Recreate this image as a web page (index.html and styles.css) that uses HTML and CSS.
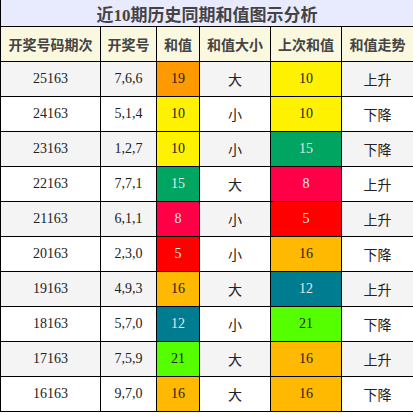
FILE: index.html
```html
<!DOCTYPE html>
<html lang="zh">

<head>
    <meta charset="UTF-8">
    <meta name="viewport" content="width=device-width, initial-scale=1.0">
    <title>近10期历史同期和值图示分析</title>
    <link rel="stylesheet" href="styles.css">
</head>

<body>
    <table class="history">
        <colgroup>
            <col class="c-issue">
            <col class="c-num">
            <col class="c-sum">
            <col class="c-size">
            <col class="c-last">
            <col class="c-trend">
        </colgroup>
        <thead>
            <tr class="title-row">
                <th colspan="6">近10期历史同期和值图示分析</th>
            </tr>
            <tr class="head-row">
                <th>开奖号码期次</th>
                <th>开奖号</th>
                <th>和值</th>
                <th>和值大小</th>
                <th>上次和值</th>
                <th>和值走势</th>
            </tr>
        </thead>
        <tbody>
            <tr>
                <td>25163</td><td>7,6,6</td><td class="v19">19</td><td class="cn">大</td><td class="v10">10</td><td class="cn">上升</td>
            </tr>
            <tr>
                <td>24163</td><td>5,1,4</td><td class="v10">10</td><td class="cn">小</td><td class="v10">10</td><td class="cn">下降</td>
            </tr>
            <tr>
                <td>23163</td><td>1,2,7</td><td class="v10">10</td><td class="cn">小</td><td class="v15">15</td><td class="cn">下降</td>
            </tr>
            <tr>
                <td>22163</td><td>7,7,1</td><td class="v15">15</td><td class="cn">大</td><td class="v8">8</td><td class="cn">上升</td>
            </tr>
            <tr>
                <td>21163</td><td>6,1,1</td><td class="v8">8</td><td class="cn">小</td><td class="v5">5</td><td class="cn">上升</td>
            </tr>
            <tr>
                <td>20163</td><td>2,3,0</td><td class="v5">5</td><td class="cn">小</td><td class="v16">16</td><td class="cn">下降</td>
            </tr>
            <tr>
                <td>19163</td><td>4,9,3</td><td class="v16">16</td><td class="cn">大</td><td class="v12">12</td><td class="cn">上升</td>
            </tr>
            <tr>
                <td>18163</td><td>5,7,0</td><td class="v12">12</td><td class="cn">小</td><td class="v21">21</td><td class="cn">下降</td>
            </tr>
            <tr>
                <td>17163</td><td>7,5,9</td><td class="v21">21</td><td class="cn">大</td><td class="v16">16</td><td class="cn">上升</td>
            </tr>
            <tr>
                <td>16163</td><td>9,7,0</td><td class="v16">16</td><td class="cn">大</td><td class="v16">16</td><td class="cn">下降</td>
            </tr>
        </tbody>
    </table>
</body>

</html>
```

FILE: styles.css
```css
body {
    margin: 0;
    background: #fff;
}

.history {
    width: 413px;
    border-collapse: collapse;
    table-layout: fixed;
    font-family: "Liberation Serif", "Noto Sans CJK SC", serif;
    font-size: 14px;
    color: #222;
}

.c-issue { width: 100px; }
.c-num { width: 56px; }
.c-sum { width: 43px; }
.c-size { width: 71px; }
.c-last { width: 71px; }
.c-trend { width: 72px; }

.history th,
.history td {
    border: 1px solid #000;
    text-align: center;
    padding: 0;
}

.title-row th {
    height: 26px;
    background-color: #e8eafd;
    font-family: "Liberation Serif", "Noto Sans CJK SC", sans-serif;
    font-size: 17px;
    font-weight: bold;
    color: #444;
    border-top: none;
}

.head-row th {
    height: 34px;
    background-color: #fbf8e0;
    font-family: "Noto Sans CJK SC", sans-serif;
    font-size: 14px;
    font-weight: bold;
    color: #444;
}

.history td {
    height: 34px;
}

.history tbody tr:nth-child(odd) {
    background-color: #f4f4f4;
}

.history tbody tr:nth-child(even) {
    background-color: #fff;
}

.history td.cn {
    font-family: "Noto Sans CJK SC", sans-serif;
    font-size: 14px;
    color: #222;
}

.v19 { background-color: #ff9900; }
.v10 { background-color: #fff200; }
.v15 { background-color: #00a562; color: #e6e6e6; }
.v8 { background-color: #ff0046; color: #eee; }
.v5 { background-color: #ff0000; color: #eee; }
.v16 { background-color: #ffb900; }
.v12 { background-color: #007c91; color: #e6e6e6; }
.v21 { background-color: #55ff00; }
```
